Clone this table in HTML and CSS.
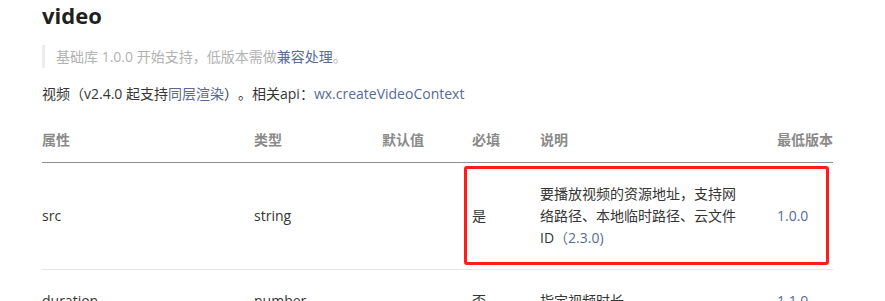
FILE: index.html
```html
<!DOCTYPE html>
<html lang="zh-CN">
<head>
<meta charset="utf-8">
<title>video</title>
<link rel="stylesheet" href="styles.css">
</head>
<body>
<main class="doc">
  <h1 class="title">video</h1>
  <blockquote class="tip">基础库 1.0.0 开始支持，低版本需做<a class="link" href="#">兼容处理</a>。</blockquote>
  <p class="intro">视频（v2.4.0 起支持<a class="link" href="#">同层渲染</a>）。相关api：<a class="link" href="#">wx.createVideoContext</a></p>
  <div class="table-wrap">
    <table class="props">
      <colgroup>
        <col class="c-name"><col class="c-type"><col class="c-def"><col class="c-req"><col class="c-desc"><col class="c-ver">
      </colgroup>
      <thead>
        <tr><th>属性</th><th>类型</th><th>默认值</th><th>必填</th><th>说明</th><th>最低版本</th></tr>
      </thead>
      <tbody>
        <tr>
          <td>src</td><td>string</td><td></td><td>是</td>
          <td>要播放视频的资源地址，支持网络路径、本地临时路径、云文件 ID<a class="link" href="#">（2.3.0)</a></td>
          <td><a class="link" href="#">1.0.0</a></td>
        </tr>
        <tr>
          <td>duration</td><td>number</td><td></td><td>否</td>
          <td>指定视频时长</td>
          <td><a class="link" href="#">1.1.0</a></td>
        </tr>
      </tbody>
    </table>
    <div class="highlight"></div>
  </div>
</main>
</body>
</html>
```

FILE: styles.css
```css
html, body {
  margin: 0;
  padding: 0;
  background: #fff;
}
body {
  font-family: "Open Sans", "Noto Sans CJK SC", sans-serif;
  font-size: 14px;
  color: #353535;
  overflow: hidden;
  text-spacing-trim: space-all;
}
.doc {
  padding: 0 0 0 42px;
  width: 791px;
}
.title {
  margin: 0;
  font-size: 22px;
  line-height: 30px;
  font-weight: 700;
  color: #1f1f1f;
}
.tip {
  margin: 15px 0 0;
  padding: 0 0 0 11px;
  border-left: 3px solid #ececec;
  color: #b2b2b2;
  line-height: 23px;
}
.link {
  color: #576b95;
  text-decoration: none;
}
.intro {
  margin: 15px 0 0;
  line-height: 22px;
}
.table-wrap {
  position: relative;
  margin-top: 13px;
}
.props {
  width: 791px;
  border-collapse: collapse;
  table-layout: fixed;
}
.c-name { width: 212px; }
.c-type { width: 128px; }
.c-def { width: 90px; }
.c-req { width: 68px; }
.c-desc { width: 237px; }
.c-ver { width: 56px; }
.props th {
  text-align: left;
  font-weight: 700;
  color: #8a8a8a;
  padding: 11px 0 11px;
  line-height: 22px;
  border-bottom: 1px solid #8f8f8f;
  white-space: nowrap;
}
.props td {
  padding: 20px 30px 20px 0;
  line-height: 22px;
  vertical-align: middle;
  border-bottom: 1px solid #e6e6e6;
}
.props td:last-child {
  padding-right: 0;
}
.highlight {
  position: absolute;
  left: 422px;
  top: 48px;
  width: 359px;
  height: 93px;
  border: 3px solid #ff1c1c;
  border-radius: 3px;
}
```
